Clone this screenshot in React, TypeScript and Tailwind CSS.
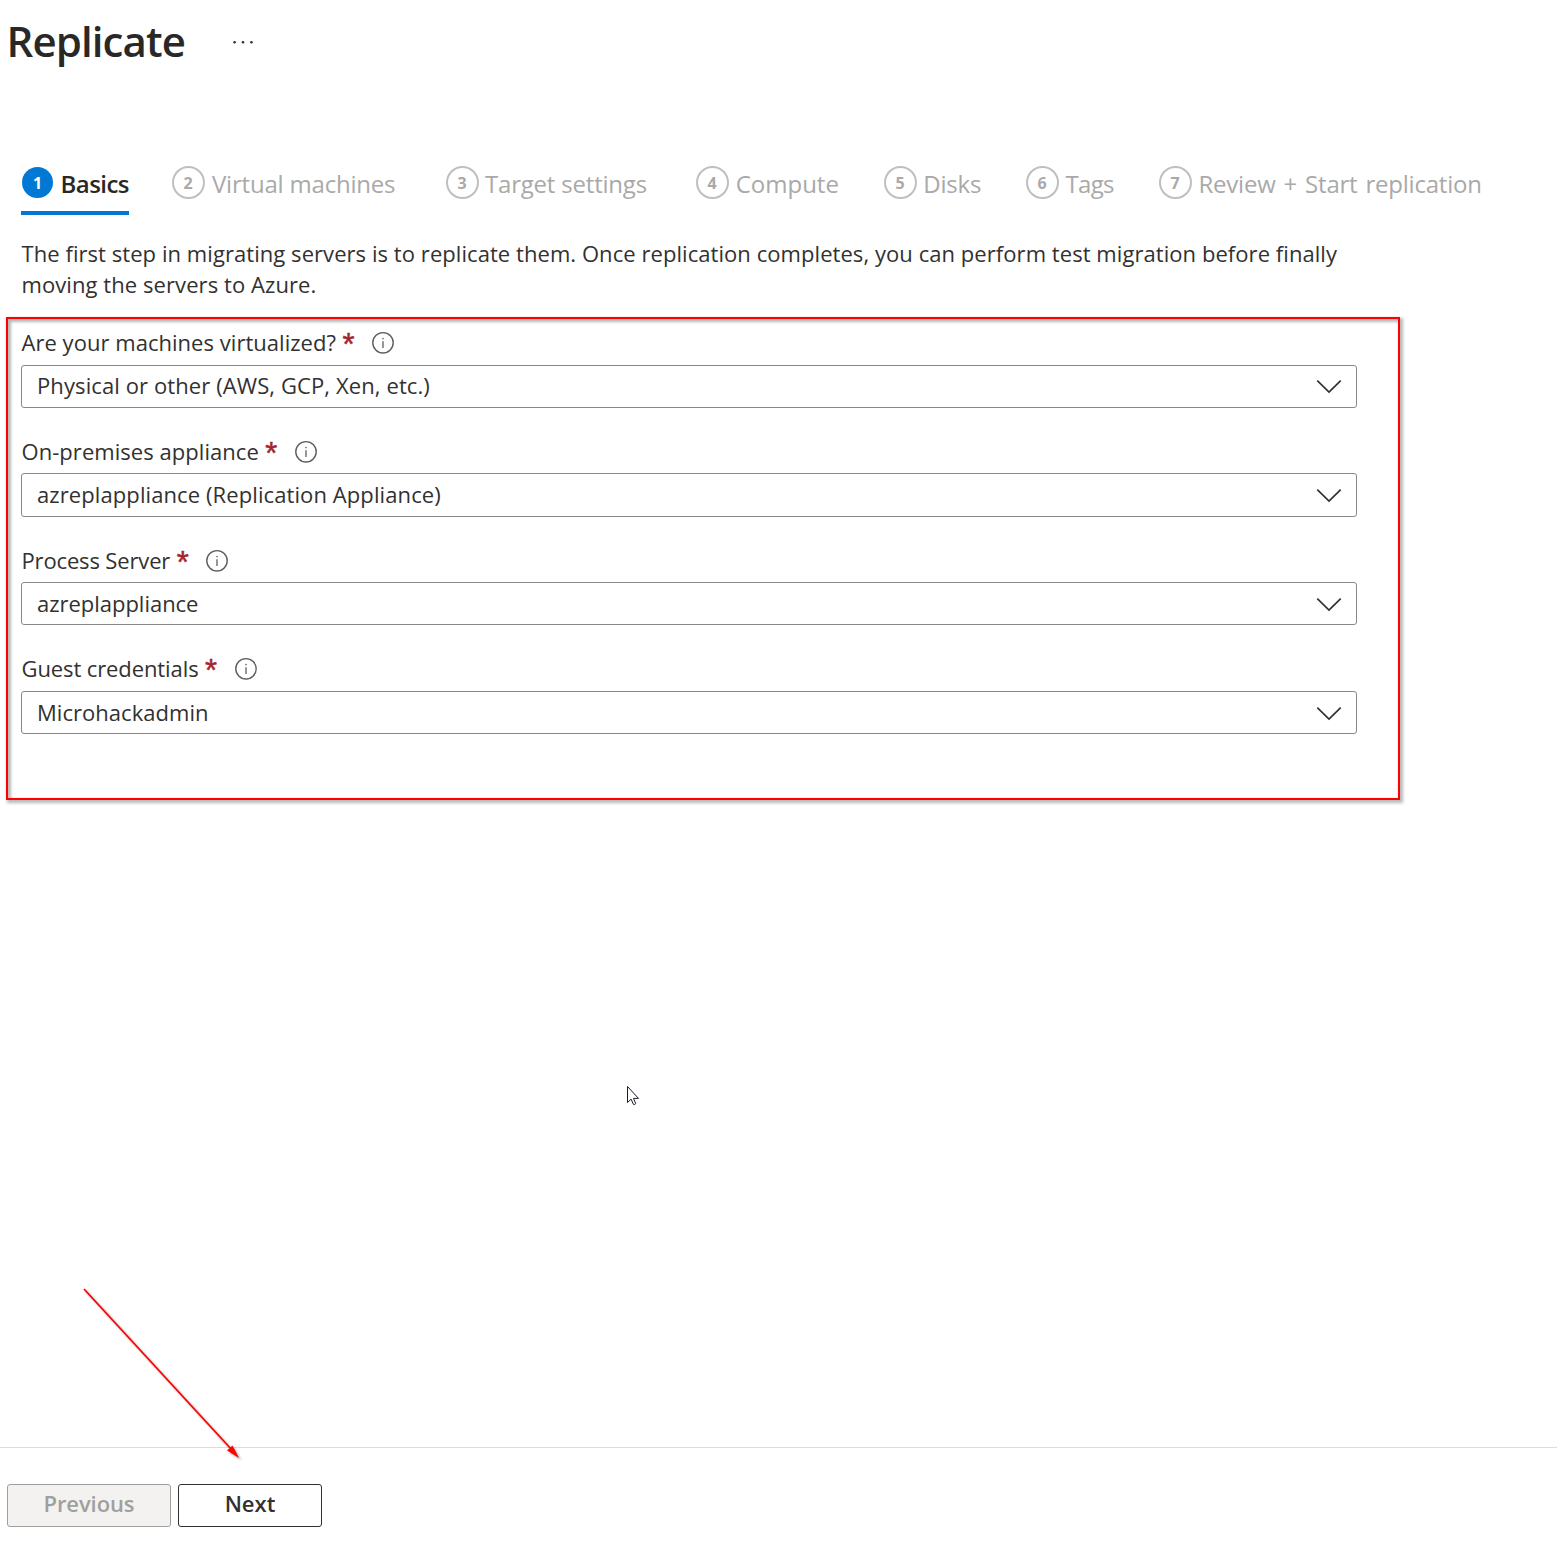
type Step = { n: number; label: string; cls: string; textCls: string };

const steps: Step[] = [
  { n: 2, label: "Virtual machines", cls: "ml-[42.5px] w-[274px]", textCls: "ml-[7.5px] tracking-[-0.2px]" },
  { n: 3, label: "Target settings", cls: "w-[250px]", textCls: "ml-[6.5px] tracking-[-0.2px]" },
  { n: 4, label: "Compute", cls: "w-[188px]", textCls: "ml-[7.2px]" },
  { n: 5, label: "Disks", cls: "w-[142px]", textCls: "ml-[6.8px] tracking-[-0.2px]" },
  { n: 6, label: "Tags", cls: "w-[133px]", textCls: "ml-[7px] tracking-[-0.7px]" },
  { n: 7, label: "Review + Start replication", cls: "", textCls: "ml-[7px] tracking-[-0.22px] [word-spacing:2px]" },
];

const fields = [
  { label: "Are your machines virtualized?", value: "Physical or other (AWS, GCP, Xen, etc.)", labelCls: "mb-[7px] tracking-[0.035px]", boxCls: "h-[43px] pt-1 tracking-[0.1px]" },
  { label: "On-premises appliance", value: "azreplappliance (Replication Appliance)", labelCls: "mb-[6px] tracking-[0.05px]", boxCls: "h-[44px] pt-[5px] tracking-[0.095px]" },
  { label: "Process Server", value: "azreplappliance", labelCls: "mb-[6px] tracking-[-0.15px]", boxCls: "h-[43px] pt-[5px] tracking-[-0.02px]" },
  { label: "Guest credentials", value: "Microhackadmin", labelCls: "mb-[7px] tracking-[-0.1px]", boxCls: "h-[43px] pt-[5px] tracking-[0.04px]" },
];

function InfoIcon() {
  return (
    <svg className="ml-[16.5px] h-6 w-6 shrink-0" viewBox="0 0 24 24" fill="none" stroke="#605e5c">
      <circle cx="12" cy="11.8" r="10.2" strokeWidth="1.4" />
      <path d="M12 10.2v6.8" strokeWidth="1.3" />
      <circle cx="12" cy="7.6" r="0.8" fill="#605e5c" stroke="none" />
    </svg>
  );
}

function Chevron() {
  return (
    <svg className="mt-[8px] mr-[14px] h-[16px] w-[26px]" viewBox="0 0 26 16" fill="none" stroke="#323130" strokeWidth="1.7">
      <path d="M1.3 2.6 13 14.1 24.7 2.6" />
    </svg>
  );
}

export default function App() {
  return (
    <div className="relative flex h-[1552px] w-[1557px] flex-col overflow-hidden bg-white font-['Open_Sans',sans-serif] text-[22px] leading-[31px] text-[#323130]">
      <header className="flex h-[166px] items-start pt-[12px] pl-[6.5px]">
        <h1 className="w-[224.5px] text-[42px] leading-[57px] font-semibold tracking-[-0.9px] text-[#292827]">Replicate</h1>
        <svg className="mt-[28px] h-1 w-6" viewBox="0 0 24 4" fill="#323130">
          <circle cx="3.6" cy="2.3" r="1.3" />
          <circle cx="12" cy="2.3" r="1.3" />
          <circle cx="20.4" cy="2.3" r="1.3" />
        </svg>
      </header>

      <nav className="flex h-[49px] shrink-0 pl-[21px] text-2xl leading-[32px] whitespace-nowrap text-[#a9a9a9]">
        <div className="flex w-[108px] items-start border-b-4 border-[#0078d4] font-semibold text-[#292827]">
          <span className="mt-px ml-px flex h-[31px] w-[31px] shrink-0 items-center justify-center rounded-full bg-[#0078d4] text-base font-bold text-white">1</span>
          <span className="mt-[2px] ml-[7.5px] tracking-[-0.55px]">Basics</span>
        </div>
        {steps.map((s) => (
          <div key={s.n} className={`flex items-start ${s.cls}`}>
            <span className="flex h-[33px] w-[33px] shrink-0 items-center justify-center rounded-full border-2 border-[#bfbfbf] text-base font-bold">{s.n}</span>
            <span className={`mt-[2px] ${s.textCls}`}>{s.label}</span>
          </div>
        ))}
      </nav>

      <p className="mt-[23px] h-[79px] shrink-0 pl-[21.5px] whitespace-nowrap">
        <span className="tracking-[0.06px]">The first step in migrating servers is to replicate them. Once replication completes, you can perform test migration before finally</span>
        <br />
        <span className="tracking-[0.077px]">moving the servers to Azure.</span>
      </p>

      <section className="ml-[6px] flex h-[483px] w-[1394px] shrink-0 flex-col gap-7 border-2 border-[#ff0000] pt-[8px] pr-[41px] pl-[13px] shadow-[2px_2px_3px_1px_rgba(0,0,0,0.28),inset_2px_2px_3px_1px_rgba(0,0,0,0.28)]">
        {fields.map((f) => (
          <div key={f.label}>
            <div className={`flex h-[31px] items-center pl-[0.5px] ${f.labelCls}`}>
              <span>{f.label}</span>
              <span className="mt-1 ml-[6.5px] font-['Liberation_Sans',sans-serif] text-[31px] text-[#a4262c] [-webkit-text-stroke:0.5px_#a4262c]">*</span>
              <InfoIcon />
            </div>
            <div className={`flex items-start justify-between rounded-[3px] border border-[#8a8886] bg-white pl-[15px] ${f.boxCls}`}>
              <span>{f.value}</span>
              <Chevron />
            </div>
          </div>
        ))}
      </section>

      <footer className="mt-auto flex h-[105px] shrink-0 gap-[7px] border-t border-[#dcdcdc] pt-[36px] pl-[7px] font-semibold">
        <button className="h-[43px] w-[164px] rounded-[3px] border border-[#a19f9d] bg-[#f3f2f1] pb-[5px] tracking-[-0.1px] text-[#a19f9d]">Previous</button>
        <button className="h-[43px] w-[144px] rounded-[3px] border border-[#323130] bg-white pb-[5px]">Next</button>
      </footer>

      <svg className="absolute top-[1085px] left-[626px] h-[22px] w-[14px]" viewBox="0 0 14 22">
        <path d="M1.5 1.5v16l3.6-3.4 2.2 5.1c.6.9 2.6.2 2.3-.9L7.5 13.4h5z" fill="#fff" stroke="#1b1b2b" strokeWidth="1" />
      </svg>

      <svg className="absolute top-[1280px] left-[76px] h-[190px] w-[176px] drop-shadow-[2px_2px_1px_rgba(0,0,0,0.35)]" viewBox="76 1280 176 190">
        <path d="M84 1289 232 1450" stroke="#ff0000" strokeWidth="1.8" />
        <path d="M239 1458 227 1450.5 232.5 1445.5z" fill="#ff0000" />
      </svg>
    </div>
  );
}
